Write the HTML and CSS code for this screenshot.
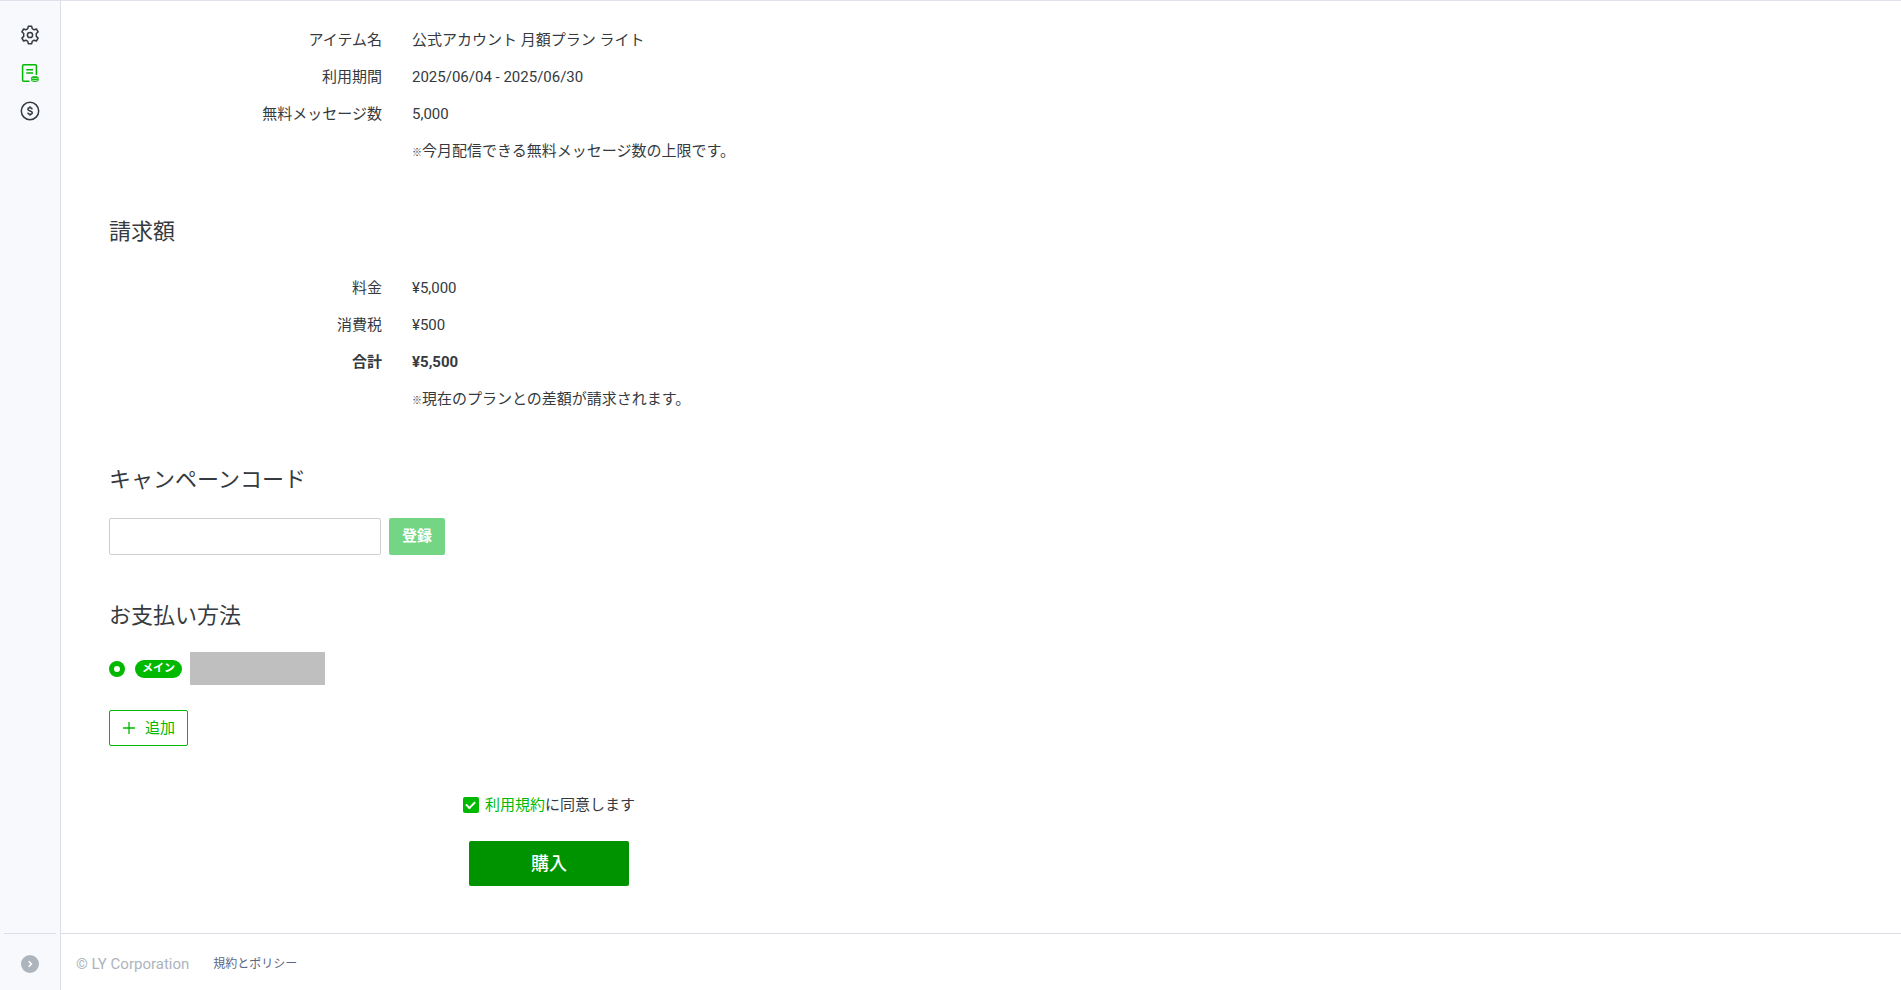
FILE: index.html
```html
<!DOCTYPE html>
<html lang="ja">
<head>
<meta charset="utf-8">
<meta name="viewport" content="width=device-width, initial-scale=1">
<title>プラン購入</title>
<link rel="stylesheet" href="styles.css">
</head>
<body>
<div class="app">
  <nav class="sidebar" aria-label="メニュー">
    <ul class="sidebar-menu">
      <li><a class="sidebar-link" href="#" aria-label="設定">
        <svg width="20" height="20" viewBox="0 0 20 20" fill="none" stroke="currentColor" stroke-width="1.5" stroke-linejoin="round"><path d="M8.300 1.300h3.400l.5 2.400 1.900 1.100 2.300-.8 1.700 2.900-1.800 1.600v2.900l1.800 1.700-1.700 2.900-2.300-.8-1.900 1.100-.5 2.400H8.300l-.5-2.400-1.900-1.100-2.300.8-1.700-2.900 1.800-1.700V8.500L1.900 6.900 3.600 4l2.300.8 1.900-1.100z"/><circle cx="10" cy="10" r="2.600"/></svg>
      </a></li>
      <li><a class="sidebar-link is-active" href="#" aria-label="購入">
        <svg width="20" height="20" viewBox="0 0 20 20" fill="none" stroke="currentColor" stroke-width="1.500"><path d="M9.500 18.200H3.600a1 1 0 0 1-1-1V2.700a1 1 0 0 1 1-1h11.800a1 1 0 0 1 1 1v9.300M6.300 6.700h6.700M6.300 10h6.700"/><path d="M11.200 14.600c0-1.900 7.400-1.900 7.400 0v3c0 1.900-7.400 1.900-7.400 0z" fill="currentColor" stroke="none"/><path d="M12.200 15.200q2.700 .9 5.400 0M12.200 17.200q2.700 .9 5.400 0" stroke="#f7f9fc" stroke-width=".7"/></svg>
      </a></li>
      <li><a class="sidebar-link" href="#" aria-label="お支払い">
        <svg width="20" height="20" viewBox="0 0 20 20" fill="none" stroke="currentColor" stroke-width="1.500"><circle cx="10" cy="10" r="8.700"/><path d="M12.200 8.300c-.3-2.200-4.300-2-4.300 0 0 2.100 4.400 1.300 4.400 3.500 0 2-4.300 2.100-4.600-.1M10 5.300v1.500M10 13.200v1.500"/></svg>
      </a></li>
    </ul>
    <div class="sidebar-foot">
      <button class="expand" type="button" aria-label="メニューを開く">
        <svg width="18" height="18" viewBox="0 0 18 18" fill="none" stroke="#fff" stroke-width="1.600"><path d="M7.700 6.300L10.400 9l-2.700 2.700"/></svg>
      </button>
    </div>
  </nav>

  <div class="page">
    <main class="content">
      <dl class="details">
        <dt>アイテム名</dt><dd>公式アカウント 月額プラン ライト</dd>
        <dt>利用期間</dt><dd>2025/06/04 - 2025/06/30</dd>
        <dt>無料メッセージ数</dt><dd>5,000</dd>
        <dd class="note"><span class="mark">※</span>今月配信できる無料メッセージ数の上限です。</dd>
      </dl>

      <section class="section">
        <h2 class="heading">請求額</h2>
        <dl class="details">
          <dt>料金</dt><dd>¥5,000</dd>
          <dt>消費税</dt><dd>¥500</dd>
          <dt class="total">合計</dt><dd class="total">¥5,500</dd>
          <dd class="note"><span class="mark">※</span>現在のプランとの差額が請求されます。</dd>
        </dl>
      </section>

      <section class="section campaign">
        <h2 class="heading" id="campaign">キャンペーンコード</h2>
        <form class="campaign-form">
          <input class="code" type="text" aria-labelledby="campaign">
          <button class="register" type="button">登録</button>
        </form>
      </section>

      <section class="section payment">
        <h2 class="heading">お支払い方法</h2>
        <label class="method">
          <input class="radio" type="radio" name="method" checked>
          <span class="badge">メイン</span>
          <span class="masked"></span>
        </label>
        <button class="add" type="button">
          <svg width="12" height="12" viewBox="0 0 12 12" stroke="currentColor" stroke-width="1.300"><path d="M6 0v12M0 6h12"/></svg>
          追加
        </button>
      </section>

      <div class="purchase">
        <div class="agree">
          <input class="check" type="checkbox" id="agree" checked>
          <label for="agree"><a href="#">利用規約</a>に同意します</label>
        </div>
        <button class="buy" type="button">購入</button>
      </div>
    </main>

    <footer class="footer">
      <small class="copyright">© LY Corporation</small>
      <a class="policy" href="#">規約とポリシー</a>
    </footer>
  </div>
</div>
</body>
</html>
```

FILE: styles.css
```css
* {
  box-sizing: border-box;
}

body {
  margin: 0;
  color: #353a40;
  background: #fff;
  font-family: Roboto, "Noto Sans CJK JP", sans-serif;
  font-size: 15px;
  line-height: 22px;
}

button,
input {
  margin: 0;
  font: inherit;
}

a {
  color: #00b900;
  text-decoration: none;
}

svg {
  display: block;
}

.app {
  display: flex;
  min-height: 100vh;
  border-top: 1px solid #dfe1eb;
}

.sidebar {
  display: flex;
  flex: none;
  flex-direction: column;
  justify-content: space-between;
  width: 61px;
  border-right: 1px solid #dbdfe5;
  background: #f7f9fc;
}

.sidebar-menu {
  display: grid;
  justify-items: center;
  gap: 18px;
  margin: 0;
  padding: 24px 0;
  list-style: none;
}

.sidebar-link {
  display: block;
  color: #353a40;
}

.sidebar-link.is-active {
  color: #00b900;
}

.sidebar-foot {
  display: flex;
  align-items: center;
  justify-content: center;
  height: 57px;
  margin: 0 4px;
  padding-top: 3px;
  border-top: 1px solid #dbdfe5;
}

.expand {
  padding: 0;
  border: 0;
  border-radius: 50%;
  background: #adb4bc;
}

.page {
  display: flex;
  flex: 1;
  flex-direction: column;
}

.content {
  flex: 1;
  max-width: 976px;
  padding: 28px 48px 40px;
}

.details {
  display: grid;
  grid-template-columns: 273px 1fr;
  gap: 15px 30px;
  margin: 0;
}

.details dt {
  text-align: right;
}

.details dd {
  margin: 0;
}

.details .note {
  grid-column: 2;
}

.details .total {
  font-weight: 700;
}

.mark {
  font-size: 10px;
  font-weight: 700;
}

.section {
  margin-top: 51px;
}

.heading {
  margin: 0 0 28px;
  font-size: 22px;
  font-weight: 400;
  line-height: 34px;
}

.campaign .heading {
  margin-bottom: 21px;
}

.campaign-form {
  display: flex;
  gap: 8px;
}

.code {
  width: 272px;
  height: 37px;
  padding: 0 12px;
  border: 1px solid #cbd0d5;
  border-radius: 2px;
}

.register {
  width: 56px;
  padding: 0 0 2px;
  border: 0;
  border-radius: 2px;
  color: #fff;
  background: #74d684;
  font-weight: 700;
}

.payment {
  margin-top: 44px;
}

.payment .heading {
  margin-bottom: 19px;
}

.method {
  display: flex;
  align-items: center;
  width: max-content;
}

.radio {
  appearance: none;
  width: 16px;
  height: 16px;
  margin-right: 10px;
  border: 5px solid #00b900;
  border-radius: 50%;
  background: #fff;
}

.badge {
  margin-right: 8px;
  padding: 0 7px;
  border-radius: 9px;
  color: #fff;
  background: #00b900;
  font-size: 11px;
  font-weight: 700;
  line-height: 18px;
}

.masked {
  width: 135px;
  height: 33px;
  background: #bfbfbf;
}

.add {
  display: flex;
  align-items: center;
  gap: 10px;
  height: 36px;
  margin-top: 25px;
  padding: 0 12px 0 13px;
  border: 1px solid #00b900;
  border-radius: 2px;
  color: #00b900;
  background: #fff;
}

.purchase {
  display: grid;
  justify-items: center;
  gap: 25px;
  margin-top: 48px;
}

.agree {
  display: flex;
  align-items: center;
  gap: 6px;
}

.check {
  display: grid;
  place-items: center;
  appearance: none;
  width: 16px;
  height: 16px;
  border-radius: 2px;
  background: #00b900;
}

.check::before {
  content: "";
  width: 7px;
  height: 4px;
  margin-bottom: 2px;
  border: solid #fff;
  border-width: 0 0 2px 2px;
  transform: rotate(-45deg);
}

.buy {
  width: 160px;
  height: 45px;
  padding: 0;
  border: 0;
  border-radius: 2px;
  color: #fff;
  background: #009300;
  font-size: 18px;
  font-weight: 500;
}

.footer {
  display: flex;
  align-items: center;
  gap: 24px;
  height: 57px;
  padding: 3px 15px 0;
  border-top: 1px solid #dbdfe5;
}

.copyright {
  color: #adb4bc;
  font-size: 15px;
}

.policy {
  color: #5c6584;
  font-size: 12px;
}
```
